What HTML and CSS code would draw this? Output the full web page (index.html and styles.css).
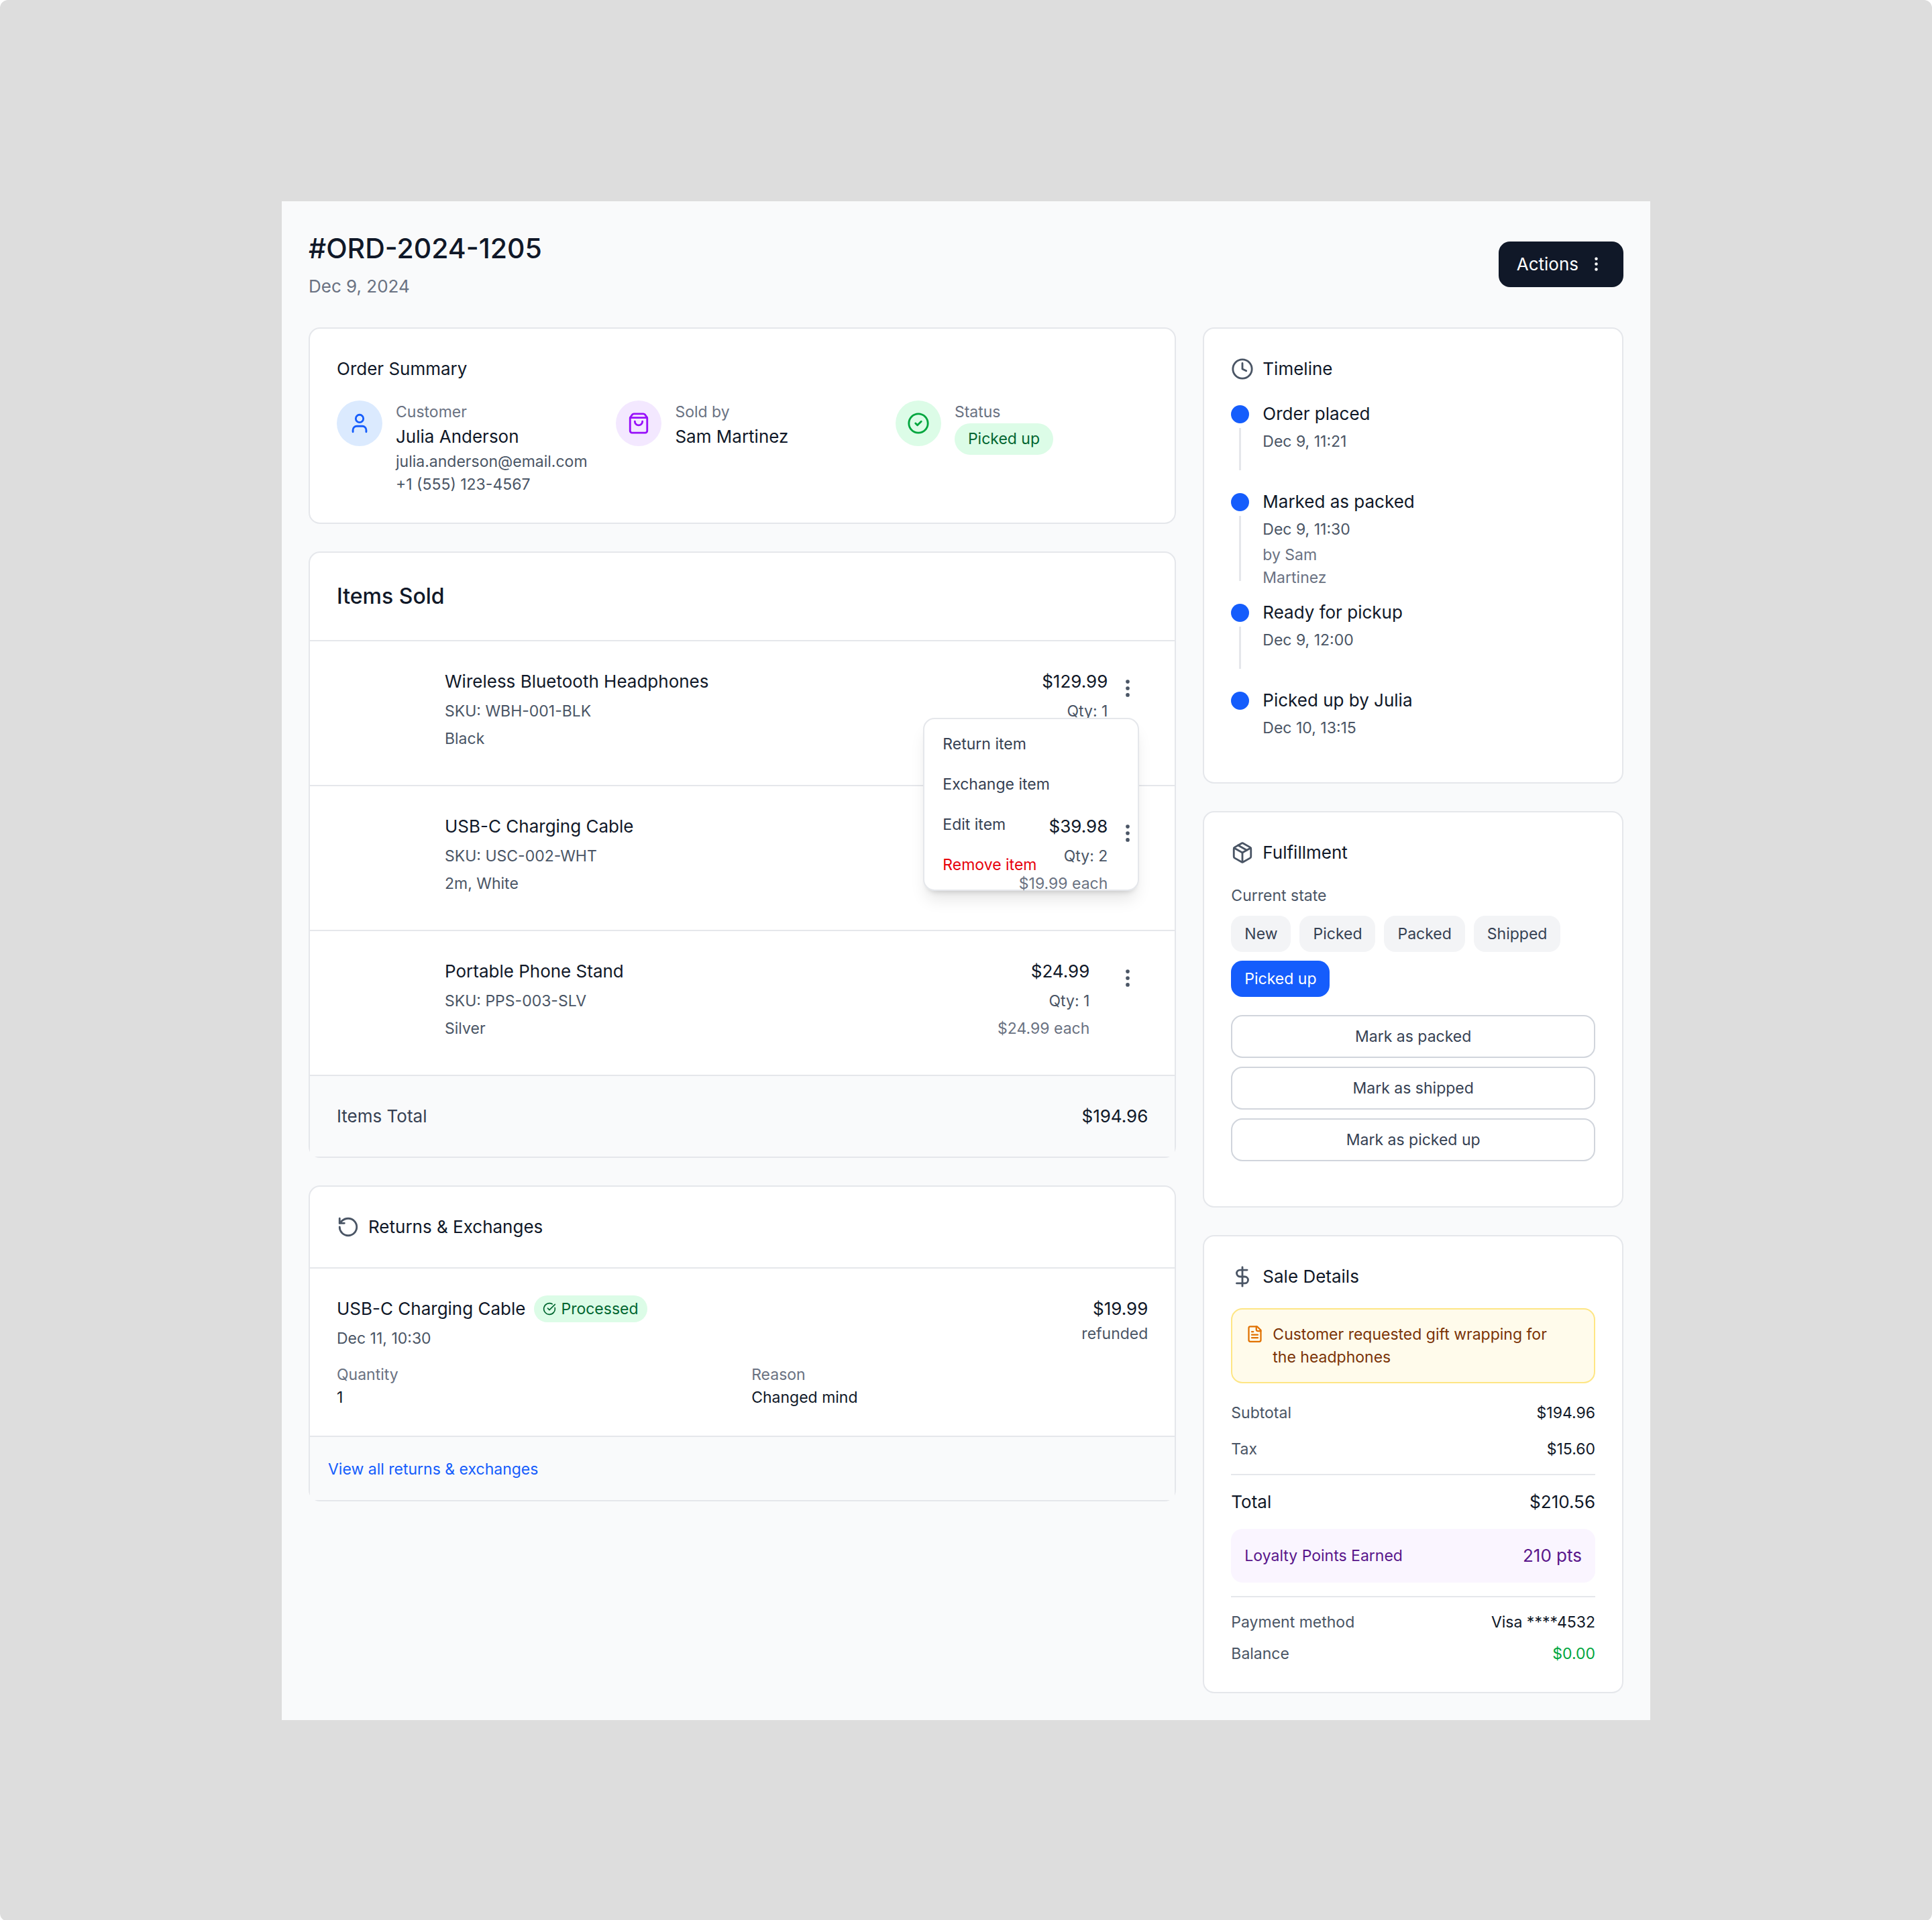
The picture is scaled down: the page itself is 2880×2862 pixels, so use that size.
FILE: index.html
```html
<!DOCTYPE html>
<html lang="en">

<head>
    <meta charset="UTF-8">
    <meta name="viewport" content="width=device-width, initial-scale=1.0">
    <title>Order #ORD-2024-1205</title>
    <link rel="stylesheet" href="styles.css">
</head>

<body>
    <main class="page">
        <header class="page-header">
            <div>
                <h1>#ORD-2024-1205</h1>
                <p class="order-date">Dec 9, 2024</p>
            </div>
            <button type="button" class="actions-btn">
                Actions
                <svg class="icon-sm" viewBox="0 0 24 24"><circle cx="12" cy="12" r="1"/><circle cx="12" cy="5" r="1"/><circle cx="12" cy="19" r="1"/></svg>
            </button>
        </header>

        <div class="columns">
            <div class="stack">
                <!-- order summary -->
                <section class="card padded">
                    <h2 class="card-title">Order Summary</h2>
                    <div class="summary">
                        <div class="summary-item">
                            <div class="circle blue">
                                <svg class="icon" viewBox="0 0 24 24"><path d="M19 21v-2a4 4 0 0 0-4-4H9a4 4 0 0 0-4 4v2"/><circle cx="12" cy="7" r="4"/></svg>
                            </div>
                            <div>
                                <p class="small muted">Customer</p>
                                <p>Julia Anderson</p>
                                <p class="small gray">julia.anderson@email.com</p>
                                <p class="small gray">+1 (555) 123-4567</p>
                            </div>
                        </div>
                        <div class="summary-item">
                            <div class="circle purple">
                                <svg class="icon" viewBox="0 0 24 24"><path d="M16 10a4 4 0 0 1-8 0"/><path d="M3.103 6.034h17.794"/><path d="M3.4 5.467a2 2 0 0 0-.4 1.2V20a2 2 0 0 0 2 2h14a2 2 0 0 0 2-2V6.667a2 2 0 0 0-.4-1.2l-2-2.667A2 2 0 0 0 17 2H7a2 2 0 0 0-1.6.8z"/></svg>
                            </div>
                            <div>
                                <p class="small muted">Sold by</p>
                                <p>Sam Martinez</p>
                            </div>
                        </div>
                        <div class="summary-item">
                            <div class="circle green">
                                <svg class="icon" viewBox="0 0 24 24"><circle cx="12" cy="12" r="10"/><path d="m9 12 2 2 4-4"/></svg>
                            </div>
                            <div>
                                <p class="small muted">Status</p>
                                <span class="status">Picked up</span>
                            </div>
                        </div>
                    </div>
                </section>

                <!-- items sold -->
                <section class="card">
                    <h2 class="items-title">Items Sold</h2>
                    <ul>
                        <li class="item">
                            <div class="thumb"></div>
                            <div class="item-info">
                                <h3>Wireless Bluetooth Headphones</h3>
                                <p class="small gray">SKU: WBH-001-BLK</p>
                                <p class="small gray">Black</p>
                            </div>
                            <div class="item-price">
                                <p>$129.99</p>
                                <p class="small gray">Qty: 1</p>
                            </div>
                            <div class="item-menu">
                                <button type="button" class="dots-btn" aria-label="Item actions" aria-expanded="true">
                                    <svg class="icon" viewBox="0 0 24 24"><circle cx="12" cy="12" r="1"/><circle cx="12" cy="5" r="1"/><circle cx="12" cy="19" r="1"/></svg>
                                </button>
                                <div class="menu">
                                    <button type="button">Return item</button>
                                    <button type="button">Exchange item</button>
                                    <button type="button">Edit item</button>
                                    <button type="button" class="danger">Remove item</button>
                                </div>
                            </div>
                        </li>
                        <li class="item">
                            <div class="thumb"></div>
                            <div class="item-info">
                                <h3>USB-C Charging Cable</h3>
                                <p class="small gray">SKU: USC-002-WHT</p>
                                <p class="small gray">2m, White</p>
                            </div>
                            <div class="item-price raised">
                                <p>$39.98</p>
                                <p class="small gray">Qty: 2</p>
                                <p class="small muted">$19.99 each</p>
                            </div>
                            <div class="item-menu raised">
                                <button type="button" class="dots-btn" aria-label="Item actions">
                                    <svg class="icon" viewBox="0 0 24 24"><circle cx="12" cy="12" r="1"/><circle cx="12" cy="5" r="1"/><circle cx="12" cy="19" r="1"/></svg>
                                </button>
                            </div>
                        </li>
                        <li class="item">
                            <div class="thumb"></div>
                            <div class="item-info">
                                <h3>Portable Phone Stand</h3>
                                <p class="small gray">SKU: PPS-003-SLV</p>
                                <p class="small gray">Silver</p>
                            </div>
                            <div class="item-price spaced">
                                <p>$24.99</p>
                                <p class="small gray">Qty: 1</p>
                                <p class="small muted">$24.99 each</p>
                            </div>
                            <div class="item-menu">
                                <button type="button" class="dots-btn" aria-label="Item actions">
                                    <svg class="icon" viewBox="0 0 24 24"><circle cx="12" cy="12" r="1"/><circle cx="12" cy="5" r="1"/><circle cx="12" cy="19" r="1"/></svg>
                                </button>
                            </div>
                        </li>
                    </ul>
                    <div class="items-total">
                        <span class="dark-gray">Items Total</span>
                        <span>$194.96</span>
                    </div>
                </section>

                <!-- returns -->
                <section class="card">
                    <h2 class="card-title returns-title">
                        <svg class="icon" viewBox="0 0 24 24"><path d="M3 12a9 9 0 1 0 9-9 9.75 9.75 0 0 0-6.74 2.74L3 8"/><path d="M3 3v5h5"/></svg>
                        Returns &amp; Exchanges
                    </h2>
                    <div class="return">
                        <div class="return-top">
                            <div>
                                <div class="return-name">
                                    <h3>USB-C Charging Cable</h3>
                                    <span class="processed">
                                        <svg class="icon-xs" viewBox="0 0 24 24"><path d="M21.801 10A10 10 0 1 1 17 3.335"/><path d="m9 11 3 3L22 4"/></svg>
                                        Processed
                                    </span>
                                </div>
                                <p class="small gray return-date">Dec 11, 10:30</p>
                            </div>
                            <div class="refund">
                                <p>$19.99</p>
                                <p class="small gray">refunded</p>
                            </div>
                        </div>
                        <dl class="return-details small">
                            <div>
                                <dt class="muted">Quantity</dt>
                                <dd>1</dd>
                            </div>
                            <div>
                                <dt class="muted">Reason</dt>
                                <dd>Changed mind</dd>
                            </div>
                        </dl>
                    </div>
                    <div class="returns-footer">
                        <a href="#" class="small">View all returns &amp; exchanges</a>
                    </div>
                </section>
            </div>

            <div class="stack">
                <!-- timeline -->
                <section class="card padded">
                    <h2 class="card-title">
                        <svg class="icon" viewBox="0 0 24 24"><circle cx="12" cy="12" r="10"/><path d="M12 6v6l4 2"/></svg>
                        Timeline
                    </h2>
                    <ol>
                        <li class="event">
                            <div class="marker"></div>
                            <div class="event-text">
                                <h3>Order placed</h3>
                                <p class="small gray">Dec 9, 11:21</p>
                            </div>
                        </li>
                        <li class="event">
                            <div class="marker"></div>
                            <div class="event-text">
                                <h3>Marked as packed</h3>
                                <p class="small gray">Dec 9, 11:30</p>
                                <p class="small muted">by Sam<br>Martinez</p>
                            </div>
                        </li>
                        <li class="event">
                            <div class="marker"></div>
                            <div class="event-text">
                                <h3>Ready for pickup</h3>
                                <p class="small gray">Dec 9, 12:00</p>
                            </div>
                        </li>
                        <li class="event">
                            <div class="marker"></div>
                            <div class="event-text">
                                <h3>Picked up by Julia</h3>
                                <p class="small gray">Dec 10, 13:15</p>
                            </div>
                        </li>
                    </ol>
                </section>

                <!-- fulfillment -->
                <section class="card padded fulfillment">
                    <h2 class="card-title">
                        <svg class="icon" viewBox="0 0 24 24"><path d="M11 21.73a2 2 0 0 0 2 0l7-4A2 2 0 0 0 21 16V8a2 2 0 0 0-1-1.73l-7-4a2 2 0 0 0-2 0l-7 4A2 2 0 0 0 3 8v8a2 2 0 0 0 1 1.73z"/><path d="M12 22V12"/><path d="M3.29 7 12 12l8.71-5"/><path d="m7.5 4.27 9 5.15"/></svg>
                        Fulfillment
                    </h2>
                    <p class="small gray">Current state</p>
                    <div class="states">
                        <span class="state">New</span>
                        <span class="state">Picked</span>
                        <span class="state">Packed</span>
                        <span class="state">Shipped</span>
                        <span class="state active">Picked up</span>
                    </div>
                    <div class="state-buttons">
                        <button type="button">Mark as packed</button>
                        <button type="button">Mark as shipped</button>
                        <button type="button">Mark as picked up</button>
                    </div>
                </section>

                <!-- sale details -->
                <section class="card padded">
                    <h2 class="card-title">
                        <svg class="icon" viewBox="0 0 24 24"><path d="M12 2v20"/><path d="M17 5H9.500a3.500 3.500 0 0 0 0 7h5a3.500 3.500 0 0 1 0 7H6"/></svg>
                        Sale Details
                    </h2>
                    <div class="note">
                        <svg class="icon-sm" viewBox="0 0 24 24"><path d="M15 2H6a2 2 0 0 0-2 2v16a2 2 0 0 0 2 2h12a2 2 0 0 0 2-2V7Z"/><path d="M14 2v4a2 2 0 0 0 2 2h4"/><path d="M10 9H8"/><path d="M16 13H8"/><path d="M16 17H8"/></svg>
                        <p>Customer requested gift wrapping for the headphones</p>
                    </div>
                    <dl class="sums small">
                        <div><dt>Subtotal</dt><dd>$194.96</dd></div>
                        <div><dt>Tax</dt><dd>$15.60</dd></div>
                    </dl>
                    <div class="total">
                        <span>Total</span>
                        <span>$210.56</span>
                    </div>
                    <div class="loyalty">
                        <span class="small">Loyalty Points Earned</span>
                        <span>210 pts</span>
                    </div>
                    <dl class="payment small">
                        <div><dt>Payment method</dt><dd>Visa ****4532</dd></div>
                        <div><dt>Balance</dt><dd class="paid">$0.00</dd></div>
                    </dl>
                </section>
            </div>
        </div>
    </main>
</body>

</html>
```
FILE: styles.css
```css
* {
    box-sizing: border-box;
    margin: 0;
    padding: 0;
}

html {
    background: #fff;
}

body {
    background: #ddd;
    border-radius: 12px;
    padding: 300px 420px;
    font-family: Inter, "Liberation Sans", sans-serif;
    font-size: 26px;
    line-height: 40px;
    color: #101828;
}

h1, h2, h3 {
    font-weight: 400;
    font-size: 26px;
}

ul, ol {
    list-style: none;
}

button {
    font: inherit;
    color: inherit;
    background: none;
    border: none;
}

svg {
    display: block;
    flex-shrink: 0;
    fill: none;
    stroke: currentColor;
    stroke-width: 2;
    stroke-linecap: round;
    stroke-linejoin: round;
}

.icon {
    width: 34px;
    height: 34px;
}
.icon-sm {
    width: 27px;
    height: 27px;
}
.icon-xs {
    width: 20px;
    height: 20px;
}

.small {
    font-size: 23px;
    line-height: 34px;
}
.muted {
    color: #6a7282;
}
.gray {
    color: #4a5565;
}
.dark-gray {
    color: #364153;
}

/* page */
.page {
    background: #f9fafb;
    padding: 40px;
}

.page-header {
    display: flex;
    justify-content: space-between;
    align-items: center;
    margin-bottom: 41px;
}
.page-header h1 {
    font-size: 41px;
    line-height: 60px;
    font-weight: 500;
}
.order-date {
    margin-top: 7px;
    color: #6a7282;
}

.actions-btn {
    display: flex;
    align-items: center;
    gap: 13px;
    padding: 14px 27px;
    background: #101828;
    color: #fff;
    border-radius: 17px;
}

.columns {
    display: grid;
    grid-template-columns: repeat(3, minmax(0, 1fr));
    gap: 40px;
    align-items: start;
}
.stack {
    display: flex;
    flex-direction: column;
    gap: 41px;
}
.stack:first-child {
    grid-column: span 2;
}

.card {
    background: #fff;
    border: 2px solid #e5e7eb;
    border-radius: 17px;
}
.padded {
    padding: 40px;
}
.card-title {
    display: flex;
    align-items: center;
    gap: 13px;
    margin-bottom: 27px;
}
.card-title .icon {
    color: #4a5565;
}

/* order summary */
.summary {
    display: grid;
    grid-template-columns: repeat(3, minmax(0, 1fr));
    gap: 40px;
}
.summary-item {
    display: flex;
    align-items: flex-start;
    gap: 20px;
}
.circle {
    display: flex;
    flex-shrink: 0;
    align-items: center;
    justify-content: center;
    width: 68px;
    height: 68px;
    border-radius: 50%;
}
.circle.blue {
    background: #dbeafe;
    color: #155dfc;
}
.circle.purple {
    background: #f3e8ff;
    color: #9810fa;
}
.circle.green {
    background: #dcfce7;
    color: #00a63e;
}
.status {
    display: block;
    width: fit-content;
    padding: 7px 20px;
    border-radius: 24px;
    font-size: 23px;
    line-height: 33px;
    background: #dcfce7;
    color: #016630;
}

/* items */
.items-title {
    padding: 40px;
    font-size: 32px;
    line-height: 50px;
    font-weight: 500;
    border-bottom: 2px solid #e5e7eb;
}
.item {
    display: flex;
    align-items: flex-start;
    padding: 40px;
    border-bottom: 2px solid #e5e7eb;
}
.thumb {
    width: 134px;
    height: 134px;
    margin-right: 27px;
}
.item-info {
    flex: 1;
}
.item-info p,
.item-price .small {
    margin-top: 7px;
}
.item-price {
    text-align: right;
}
.item-price.spaced {
    margin-right: 27px;
}
.item-menu {
    position: relative;
}
.raised {
    position: relative;
    z-index: 2;
}
.dots-btn {
    display: block;
    padding: 13px;
    color: #4a5565;
}
.menu {
    position: absolute;
    z-index: 1;
    top: 74px;
    right: 13px;
    width: 322px;
    padding: 7px 0;
    background: #fff;
    border: 2px solid #e5e7eb;
    border-radius: 17px;
    box-shadow: 0 17px 25px -5px rgba(0, 0, 0, 0.1), 0 7px 10px -7px rgba(0, 0, 0, 0.2);
}
.menu button {
    display: block;
    width: 100%;
    padding: 13px 27px;
    font-size: 23px;
    line-height: 34px;
    text-align: left;
    color: #364153;
}
.menu .danger {
    color: #e7000b;
}
.items-total {
    display: flex;
    justify-content: space-between;
    padding: 40px;
    background: #f9fafb;
}

/* returns */
.returns-title {
    padding: 40px;
    margin-bottom: 0;
    border-bottom: 2px solid #e5e7eb;
}
.return {
    padding: 40px;
    border-bottom: 2px solid #e5e7eb;
}
.return-top {
    display: flex;
    justify-content: space-between;
    margin-bottom: 20px;
}
.return-name {
    display: flex;
    align-items: center;
    gap: 13px;
}
.return-date {
    margin-top: 7px;
}
.processed {
    display: flex;
    align-items: center;
    gap: 7px;
    padding: 3px 13px;
    border-radius: 20px;
    font-size: 23px;
    line-height: 34px;
    background: #dcfce7;
    color: #016630;
}
.refund {
    text-align: right;
}
.return-details {
    display: grid;
    grid-template-columns: 1fr 1fr;
    gap: 27px;
}
.returns-footer {
    padding: 27px;
    background: #f9fafb;
}
.returns-footer a {
    color: #155dfc;
    text-decoration: none;
}

/* timeline */
.event {
    display: flex;
    gap: 20px;
}
.marker {
    display: flex;
    flex-direction: column;
    align-items: center;
    width: 27px;
    padding-top: 7px;
}
.marker::before {
    content: "";
    width: 27px;
    height: 27px;
    border-radius: 50%;
    background: #155dfc;
}
.marker::after {
    content: "";
    flex: 1;
    width: 3px;
    min-height: 63px;
    margin: 7px 0 27px;
    background: #e5e7eb;
}
.event-text {
    padding-bottom: 15px;
}
.event-text p {
    margin-top: 4px;
}
.event:last-child .marker::after {
    display: none;
}
.event:last-child .event-text {
    padding-bottom: 24px;
}

/* fulfillment */
.fulfillment {
    padding-bottom: 67px;
}
.states {
    display: flex;
    flex-wrap: wrap;
    gap: 13px;
    margin: 13px 0 27px;
}
.state {
    padding: 10px 20px;
    border-radius: 17px;
    font-size: 23px;
    line-height: 34px;
    background: #f3f4f6;
    color: #364153;
}
.state.active {
    background: #155dfc;
    color: #fff;
}
.state-buttons {
    display: flex;
    flex-direction: column;
    gap: 13px;
}
.state-buttons button {
    padding: 13px;
    border: 2px solid #d1d5dc;
    border-radius: 17px;
    font-size: 23px;
    line-height: 34px;
    color: #364153;
}

/* sale details */
.note {
    display: flex;
    gap: 13px;
    padding: 20px 40px 20px 20px;
    margin-bottom: 27px;
    border: 2px solid #fee685;
    border-radius: 17px;
    background: #fffbeb;
    color: #7b3306;
    font-size: 23px;
    line-height: 34px;
}
.note svg {
    margin-top: 3px;
    color: #e17100;
}
.sums,
.payment {
    display: grid;
    gap: 20px;
}
.sums div,
.payment div,
.total,
.loyalty {
    display: flex;
    justify-content: space-between;
    align-items: center;
}
.sums dt,
.payment dt {
    color: #4a5565;
}
.total {
    margin: 20px 0;
    padding-top: 20px;
    border-top: 2px solid #e5e7eb;
}
.loyalty {
    padding: 20px;
    margin-bottom: 20px;
    border-radius: 17px;
    background: #faf5ff;
    color: #59168b;
}
.payment {
    gap: 13px;
    padding-top: 20px;
    border-top: 2px solid #e5e7eb;
}
.payment .paid {
    color: #00a63e;
}
```
